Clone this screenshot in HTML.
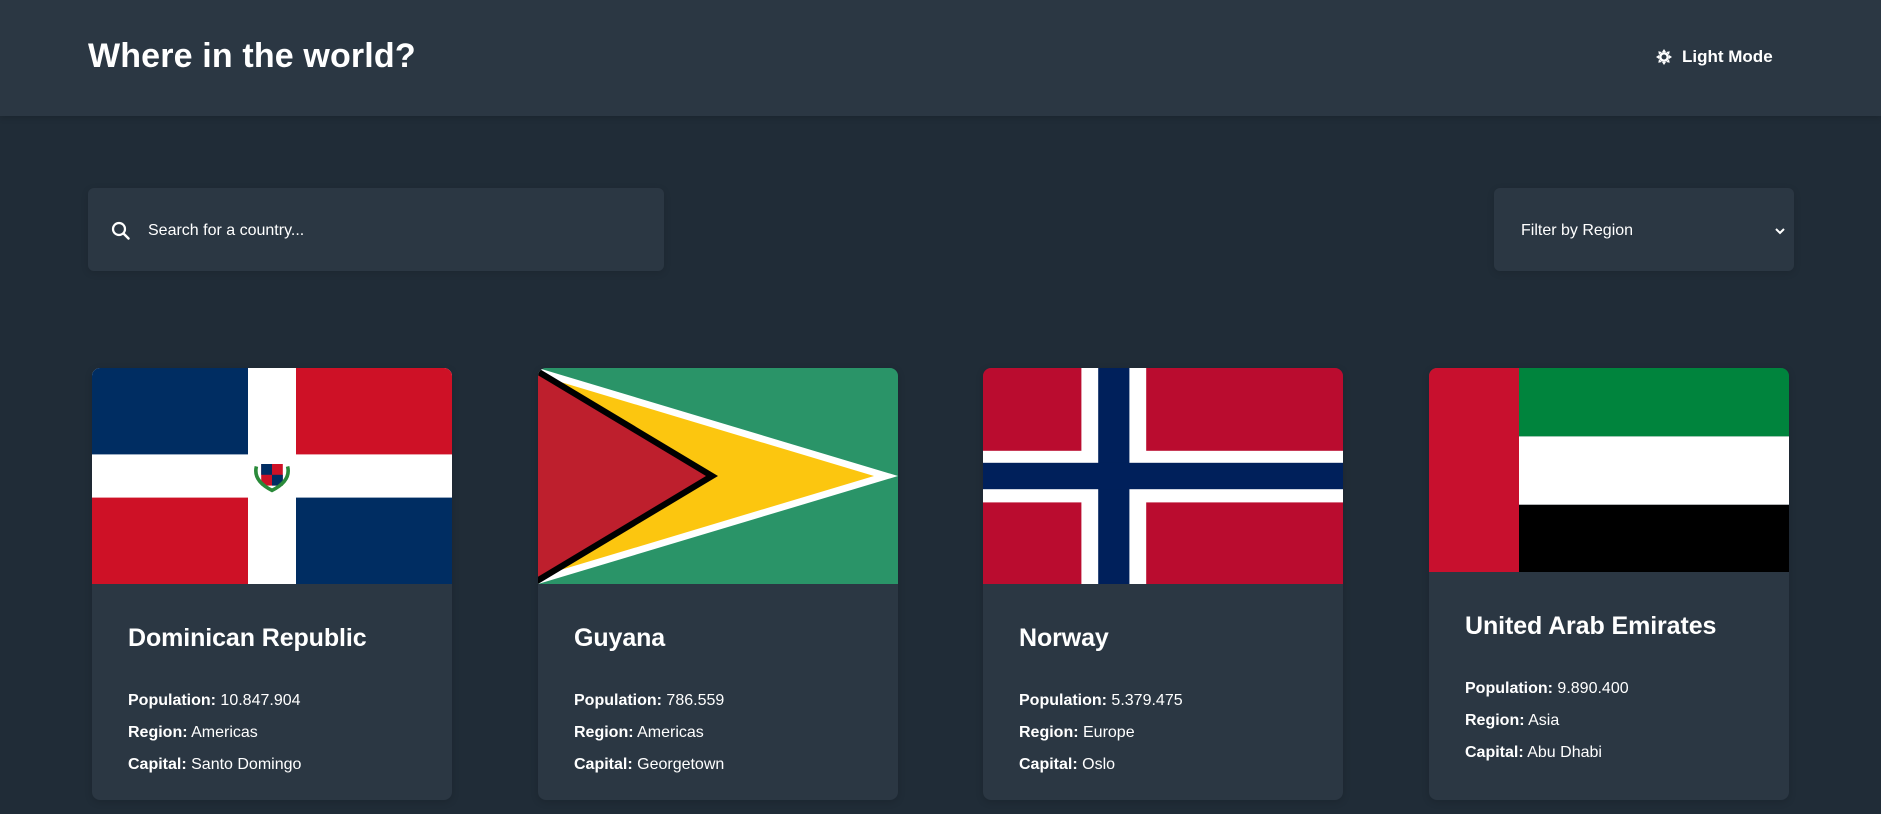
<!DOCTYPE html>
<html><head><style>
*{margin:0;padding:0;box-sizing:border-box}
body{width:1881px;height:814px;overflow:hidden;background:#202c37;font-family:"Liberation Sans",sans-serif;color:#fff;position:relative}
.hdr{position:absolute;left:0;top:0;width:1881px;height:116px;background:#2b3743;box-shadow:0 2px 6px rgba(0,0,0,.15)}
.title{position:absolute;left:88px;top:37px;font-size:34px;font-weight:bold;letter-spacing:0.15px}
.mode{position:absolute;left:1656px;top:47px;font-size:17px;font-weight:bold;display:flex;align-items:center;gap:10px}
.search{position:absolute;left:88px;top:188px;width:576px;height:83px;background:#2b3743;border-radius:6px;box-shadow:0 2px 8px rgba(0,0,0,.12)}
.search svg{position:absolute;left:23px;top:33px}
.search span{position:absolute;left:60px;top:34px;font-size:16px}
.filter{position:absolute;left:1494px;top:188px;width:300px;height:83px;background:#2b3743;border-radius:6px;box-shadow:0 2px 8px rgba(0,0,0,.12)}
.filter span{position:absolute;left:27px;top:34px;font-size:16px}
.filter svg{position:absolute;left:280px;top:38px}
.card{position:absolute;top:368px;width:360px;height:432px;background:#2b3743;border-radius:8px;overflow:hidden;box-shadow:0 2px 8px rgba(0,0,0,.15)}
.card svg.f{display:block}
.card h2{position:absolute;left:36px;font-size:25px;font-weight:bold;letter-spacing:-0.1px}
.card p{position:absolute;left:36px;font-size:16px}
.card b{font-weight:bold}
</style></head><body>
<div class="hdr">
<div class="title">Where in the world?</div>
<div class="mode"><svg width="16" height="16" viewBox="0 0 16 16"><g fill="#fff"><circle cx="8" cy="8" r="5"/><path d="M8 0l2 3h-4zM8 16l2-3h-4zM0 8l3-2v4zM16 8l-3-2v4zM2.3 2.3l3.5.7-2.8 2.8zM13.7 13.7l-3.5-.7 2.8-2.8zM13.7 2.3l-.7 3.5-2.8-2.8zM2.3 13.7l.7-3.5 2.8 2.8z"/></g><circle cx="8" cy="8" r="2.5" fill="#2b3743"/></svg>Light Mode</div>
</div>
<div class="search"><svg width="20" height="20" viewBox="0 0 20 20"><circle cx="8" cy="8" r="6" fill="none" stroke="#fff" stroke-width="2.2"/><path d="M12.5 12.5l5 5" stroke="#fff" stroke-width="2.4" stroke-linecap="round"/></svg><span>Search for a country...</span></div>
<div class="filter"><span>Filter by Region</span><svg width="12" height="10" viewBox="0 0 12 10"><path d="M2 3l4 4 4-4" fill="none" stroke="#fff" stroke-width="2"/></svg></div>

<div class="card" style="left:92px">
<svg class="f" width="360" height="216" viewBox="0 0 300 180"><rect width="300" height="180" fill="#fff"/><rect width="130" height="72" fill="#002d62"/><rect x="170" width="130" height="72" fill="#ce1126"/><rect y="108" width="130" height="72" fill="#ce1126"/><rect x="170" y="108" width="130" height="72" fill="#002d62"/><rect x="141" y="80" width="18" height="18" fill="#ce1126"/><rect x="141" y="80" width="9" height="9" fill="#002d62"/><rect x="150" y="89" width="9" height="9" fill="#002d62"/><path d="M137 82q-3 12 13 20q16-8 13-20" fill="none" stroke="#2a8a3a" stroke-width="3"/></svg>
<h2 style="top:256px">Dominican Republic</h2>
<p style="top:324px"><b>Population:</b> 10.847.904</p>
<p style="top:356px"><b>Region:</b> Americas</p>
<p style="top:388px"><b>Capital:</b> Santo Domingo</p>
</div>

<div class="card" style="left:538px">
<svg class="f" width="360" height="216" viewBox="0 0 300 180"><rect width="300" height="180" fill="#2a9468"/><path d="M0 0L300 90L0 180z" fill="#fff"/><path d="M0 6L280 90L0 174z" fill="#fcc60f"/><path d="M0 0L150 90L0 180z" fill="#000"/><path d="M0 6L140 90L0 174z" fill="#be1f2d"/></svg>
<h2 style="top:256px">Guyana</h2>
<p style="top:324px"><b>Population:</b> 786.559</p>
<p style="top:356px"><b>Region:</b> Americas</p>
<p style="top:388px"><b>Capital:</b> Georgetown</p>
</div>

<div class="card" style="left:983px">
<svg class="f" width="360" height="216" viewBox="0 0 300 180"><rect width="300" height="180" fill="#ba0c2f"/><rect x="82" width="54" height="180" fill="#fff"/><rect y="69" width="300" height="43" fill="#fff"/><rect x="96" width="26" height="180" fill="#00205b"/><rect y="79" width="300" height="22" fill="#00205b"/></svg>
<h2 style="top:256px">Norway</h2>
<p style="top:324px"><b>Population:</b> 5.379.475</p>
<p style="top:356px"><b>Region:</b> Europe</p>
<p style="top:388px"><b>Capital:</b> Oslo</p>
</div>

<div class="card" style="left:1429px">
<svg class="f" width="360" height="204" viewBox="0 0 300 170"><rect width="300" height="57" fill="#00843d"/><rect y="57" width="300" height="57" fill="#fff"/><rect y="114" width="300" height="56" fill="#000"/><rect width="75" height="170" fill="#c8102e"/></svg>
<h2 style="top:244px">United Arab Emirates</h2>
<p style="top:312px"><b>Population:</b> 9.890.400</p>
<p style="top:344px"><b>Region:</b> Asia</p>
<p style="top:376px"><b>Capital:</b> Abu Dhabi</p>
</div>
</body></html>
